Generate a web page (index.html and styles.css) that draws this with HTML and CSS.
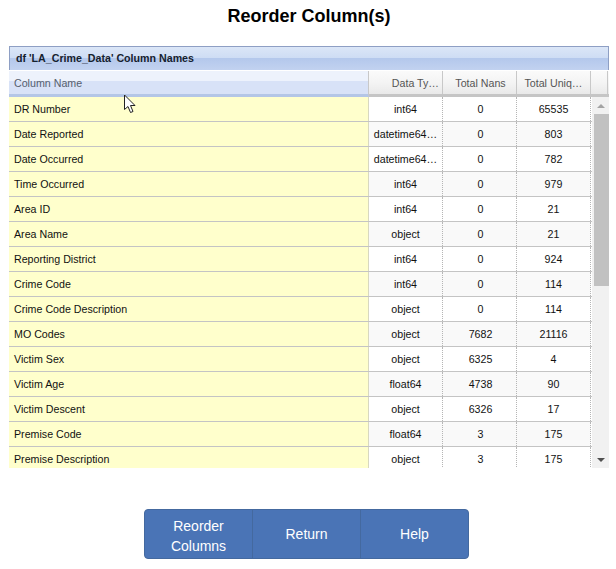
FILE: index.html
```html
<!DOCTYPE html>
<html lang="en">
<head>
    <meta charset="UTF-8">
    <title>Reorder Column(s)</title>
    <link rel="stylesheet" href="styles.css">
</head>
<body>

    <h2 class="title">Reorder Column(s)</h2>

    <div class="grid">
        <div class="caption">df 'LA_Crime_Data' Column Names</div>
        <div class="head">
            <div class="hcell name">Column Name</div>
            <div class="hcell type">Data Ty…</div>
            <div class="hcell num">Total Nans</div>
            <div class="hcell num">Total Uniq…</div>
            <div class="hcell spacer"></div>
        </div>
        <div class="body">
            <div class="rows">
                <div class="row"><div class="cell name">DR Number</div><div class="cell type">int64</div><div class="cell num">0</div><div class="cell num">65535</div></div>
                <div class="row"><div class="cell name">Date Reported</div><div class="cell type">datetime64…</div><div class="cell num">0</div><div class="cell num">803</div></div>
                <div class="row"><div class="cell name">Date Occurred</div><div class="cell type">datetime64…</div><div class="cell num">0</div><div class="cell num">782</div></div>
                <div class="row"><div class="cell name">Time Occurred</div><div class="cell type">int64</div><div class="cell num">0</div><div class="cell num">979</div></div>
                <div class="row"><div class="cell name">Area ID</div><div class="cell type">int64</div><div class="cell num">0</div><div class="cell num">21</div></div>
                <div class="row"><div class="cell name">Area Name</div><div class="cell type">object</div><div class="cell num">0</div><div class="cell num">21</div></div>
                <div class="row"><div class="cell name">Reporting District</div><div class="cell type">int64</div><div class="cell num">0</div><div class="cell num">924</div></div>
                <div class="row"><div class="cell name">Crime Code</div><div class="cell type">int64</div><div class="cell num">0</div><div class="cell num">114</div></div>
                <div class="row"><div class="cell name">Crime Code Description</div><div class="cell type">object</div><div class="cell num">0</div><div class="cell num">114</div></div>
                <div class="row"><div class="cell name">MO Codes</div><div class="cell type">object</div><div class="cell num">7682</div><div class="cell num">21116</div></div>
                <div class="row"><div class="cell name">Victim Sex</div><div class="cell type">object</div><div class="cell num">6325</div><div class="cell num">4</div></div>
                <div class="row"><div class="cell name">Victim Age</div><div class="cell type">float64</div><div class="cell num">4738</div><div class="cell num">90</div></div>
                <div class="row"><div class="cell name">Victim Descent</div><div class="cell type">object</div><div class="cell num">6326</div><div class="cell num">17</div></div>
                <div class="row"><div class="cell name">Premise Code</div><div class="cell type">float64</div><div class="cell num">3</div><div class="cell num">175</div></div>
                <div class="row"><div class="cell name">Premise Description</div><div class="cell type">object</div><div class="cell num">3</div><div class="cell num">175</div></div>
            </div>
            <div class="scrollbar">
                <div class="arrow up"></div>
                <div class="track"><div class="thumb"></div></div>
                <div class="arrow down"></div>
            </div>
        </div>
    </div>

    <div class="buttons">
        <button class="btn two-lines">Reorder Columns</button>
        <button class="btn">Return</button>
        <button class="btn">Help</button>
    </div>

    <!-- mouse pointer caught in the screenshot -->
    <svg class="pointer" width="14" height="20" viewBox="0 0 14 20">
        <path d="M1.5 1 V15.5 L5 12.5 L7.5 18.5 L10 17.5 L7.5 11.5 L12 11.5 Z" fill="#fff" stroke="#222" stroke-width="1"/>
    </svg>

</body>
</html>
```

FILE: styles.css
```css
* {
    box-sizing: border-box;
}
html, body {
    height: 100%;
}
body {
    font-family: "Liberation Sans", Arial, sans-serif;
    margin: 0;
    background: #fff;
    color: #111;
    overflow: hidden;
}
.title {
    margin: 0;
    padding: 6px 0 0 2px;
    height: 46px;
    font-size: 18px;
    line-height: 21px;
    font-weight: bold;
    text-align: center;
    color: #000;
}
.grid {
    width: 600px;
    margin-left: 9px;
    font-size: 10.67px;
}
.caption {
    height: 24px;
    padding: 4px 6px 0;
    font-weight: bold;
    font-size: 10.67px;
    line-height: 15px;
    color: #15212e;
    border: 1px solid #8e9fc4;
    border-bottom: 0;
    background: linear-gradient(#dbe6f7 0, #cddcf4 50%, #b4c8ec 50%, #c2d2f0 100%);
}
.head {
    display: flex;
    height: 27px;
    border-top: 1px solid #fff;
    border-bottom: 3px solid #c5c5c5;
    background: linear-gradient(#fafafa 0, #f4f4f4 50%, #e9e9e9 100%);
    color: #555;
}
.hcell {
    line-height: 24px;
    border-right: 1px solid #c8c8c8;
    font-size: 10.67px;
    white-space: nowrap;
}
.hcell.name {
    width: 360px;
    padding-left: 5px;
    background: linear-gradient(#edf2fc 0, #edf2fc 45%, #d8e2f7 45%, #d8e2f7 100%);
    border-bottom: 3px solid #b4c6e6;
    height: 26px;
    color: #55606e;
}
.hcell.type {
    width: 74px;
    text-align: right;
    padding-right: 3px;
}
.hcell.num {
    width: 74px;
    text-align: center;
}
.hcell.num:nth-child(3) {
    padding-left: 2px;
}
.hcell.spacer {
    width: 17px;
}
.body {
    display: flex;
    height: 371px;
    overflow: hidden;
}
.rows {
    width: 583px;
}
.row {
    display: flex;
    height: 25px;
    border-bottom: 1px solid #c4c4c4;
}
.row:nth-child(even) .cell {
    background: #f9f9f9;
}
.cell {
    height: 24px;
    line-height: 24px;
    font-size: 10.67px;
    border-right: 1px dotted #b5b5b5;
    text-align: center;
    white-space: nowrap;
    background: #fff;
}
.row .cell.name, .row:nth-child(even) .cell.name {
    width: 360px;
    text-align: left;
    padding-left: 5px;
    background: #ffffcc;
    border-right: 1px solid #d8d8c0;
}
.cell.type {
    width: 74px;
}
.cell.num {
    width: 74px;
}
.cell.num:nth-child(3) {
    padding-left: 2px;
}
.scrollbar {
    width: 17px;
    display: flex;
    flex-direction: column;
    background: #f1f1f1;
}
.arrow {
    height: 17px;
    flex: none;
    display: flex;
    justify-content: center;
    align-items: center;
}
.arrow::after {
    content: "";
    border-left: 4px solid transparent;
    border-right: 4px solid transparent;
}
.arrow.up::after {
    border-bottom: 4px solid #a3a3a3;
}
.arrow.down::after {
    border-top: 4px solid #505050;
}
.track {
    flex: 1;
}
.thumb {
    height: 172px;
    margin-left: 2px;
    background: #c1c1c1;
}
.buttons {
    display: flex;
    width: 325px;
    height: 50px;
    margin: 41px 0 0 144px;
    border: 1px solid #44699f;
    border-radius: 4px;
    background: #4a74b6;
}
.btn {
    flex: 1;
    font-family: inherit;
    font-size: 14px;
    line-height: 20px;
    color: #fff;
    background: none;
    border: none;
    border-right: 1px solid #44699f;
    padding: 0 12px;
}
.btn.two-lines {
    padding-top: 4px;
}
.btn:last-child {
    border-right: none;
}
.pointer {
    position: absolute;
    left: 123px;
    top: 94px;
}
```
